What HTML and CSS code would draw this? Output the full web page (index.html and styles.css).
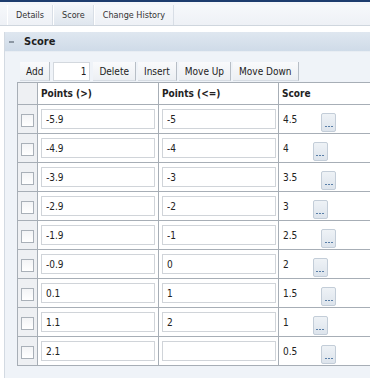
FILE: index.html
```html
<!DOCTYPE html>
<html lang="en">
  <head>
    <meta charset="UTF-8" />
    <title>Score</title>
    <link rel="stylesheet" href="styles.css">
  </head>
  <body>
    <div class="topbar"></div>
    <div class="tabs">
      <span class="tab">Details</span>
      <span class="tab selected">Score</span>
      <span class="tab">Change History</span>
    </div>

    <div class="panel">
      <div class="panel-head">
        <span class="collapse"></span>
        <span class="title">Score</span>
      </div>
      <div class="panel-body">
        <div class="toolbar">
          <button>Add</button>
          <input type="text" class="count" value="1" />
          <button>Delete</button>
          <button>Insert</button>
          <button>Move Up</button>
          <button>Move Down</button>
        </div>

        <table class="grid">
          <colgroup>
            <col class="c-sel" />
            <col class="c-from" />
            <col class="c-to" />
            <col class="c-score" />
          </colgroup>
          <thead>
            <tr>
              <th class="sel"></th>
              <th>Points (&gt;)</th>
              <th>Points (&lt;=)</th>
              <th>Score</th>
            </tr>
          </thead>
          <tbody>
            <tr>
              <td class="sel"><span class="check"></span></td>
              <td><input type="text" value="-5.9" /></td>
              <td><input type="text" value="-5" /></td>
              <td><div class="score">4.5<span class="more"><i></i><i></i><i></i></span></div></td>
            </tr>
            <tr>
              <td class="sel"><span class="check"></span></td>
              <td><input type="text" value="-4.9" /></td>
              <td><input type="text" value="-4" /></td>
              <td><div class="score">4<span class="more"><i></i><i></i><i></i></span></div></td>
            </tr>
            <tr>
              <td class="sel"><span class="check"></span></td>
              <td><input type="text" value="-3.9" /></td>
              <td><input type="text" value="-3" /></td>
              <td><div class="score">3.5<span class="more"><i></i><i></i><i></i></span></div></td>
            </tr>
            <tr>
              <td class="sel"><span class="check"></span></td>
              <td><input type="text" value="-2.9" /></td>
              <td><input type="text" value="-2" /></td>
              <td><div class="score">3<span class="more"><i></i><i></i><i></i></span></div></td>
            </tr>
            <tr>
              <td class="sel"><span class="check"></span></td>
              <td><input type="text" value="-1.9" /></td>
              <td><input type="text" value="-1" /></td>
              <td><div class="score">2.5<span class="more"><i></i><i></i><i></i></span></div></td>
            </tr>
            <tr>
              <td class="sel"><span class="check"></span></td>
              <td><input type="text" value="-0.9" /></td>
              <td><input type="text" value="0" /></td>
              <td><div class="score">2<span class="more"><i></i><i></i><i></i></span></div></td>
            </tr>
            <tr>
              <td class="sel"><span class="check"></span></td>
              <td><input type="text" value="0.1" /></td>
              <td><input type="text" value="1" /></td>
              <td><div class="score">1.5<span class="more"><i></i><i></i><i></i></span></div></td>
            </tr>
            <tr>
              <td class="sel"><span class="check"></span></td>
              <td><input type="text" value="1.1" /></td>
              <td><input type="text" value="2" /></td>
              <td><div class="score">1<span class="more"><i></i><i></i><i></i></span></div></td>
            </tr>
            <tr>
              <td class="sel"><span class="check"></span></td>
              <td><input type="text" value="2.1" /></td>
              <td><input type="text" value="" /></td>
              <td><div class="score">0.5<span class="more"><i></i><i></i><i></i></span></div></td>
            </tr>
          </tbody>
        </table>
      </div>
    </div>
  </body>
</html>
```

FILE: styles.css
```css
body {
  margin: 0;
  padding: 0;
  background: #ffffff;
  font-family: "DejaVu Sans Condensed", "DejaVu Sans", sans-serif;
  font-size: 10px;
  color: #222;
  overflow: hidden;
}

.topbar {
  height: 2px;
  background: #1d3c6e;
  border-bottom: 3px solid #f4f6fa;
}

.tabs {
  display: flex;
  height: 20px;
  padding-left: 7px;
  background: linear-gradient(#f6f8fb, #eef1f6);
  border-bottom: 1px solid #cfd6de;
}

.tab {
  display: flex;
  align-items: center;
  padding: 0 8px;
  font-size: 9px;
  color: #333;
  border-left: 1px solid #ffffff;
  border-right: 1px solid #d8dee6;
}

.tab.selected {
  background: linear-gradient(#f2f5f9, #dfe6ee);
}

.panel {
  margin-top: 6px;
  margin-left: 4px;
  border-left: 1px solid #d3dae2;
  background: #eff3f8;
  height: 400px;
}

.panel-head {
  display: flex;
  align-items: center;
  height: 19px;
  background: linear-gradient(#dfe7f0, #cfdbe8);
  border-bottom: 1px solid #e8edf3;
}

.collapse {
  width: 5px;
  height: 2px;
  margin: 0 10px 0 4px;
  background: #8c97a3;
}

.title {
  font-weight: bold;
  font-size: 11px;
  color: #1e1e1e;
}

.panel-body {
  padding: 10px 0 0 12px;
}

.toolbar {
  display: flex;
  align-items: center;
  gap: 2px;
  height: 19px;
  padding-left: 3px;
  margin-bottom: 1px;
}

.toolbar button {
  height: 19px;
  padding: 0 6px;
  font-family: inherit;
  font-size: 10px;
  color: #222;
  background: linear-gradient(#f9fafc, #eceff3);
  border: none;
  border-right: 1px solid #b7bec6;
  border-bottom: 1px solid #d5dbe2;
  border-radius: 0;
}

.toolbar .count {
  width: 32px;
  height: 17px;
  padding: 0 3px 0 0;
  margin: 0 1px;
  text-align: right;
  font-family: inherit;
  font-size: 10px;
  color: #222;
  border: 1px solid #d3d8de;
  background: #ffffff;
}

.grid {
  border-collapse: collapse;
  table-layout: fixed;
  width: 380px;
  background: #ffffff;
}

.c-sel {
  width: 20px;
}

.c-from {
  width: 121px;
}

.c-to {
  width: 120px;
}

.grid th,
.grid td {
  border: 1px solid #a7aeb6;
  padding: 0 3px;
  text-align: left;
}

.grid th {
  height: 21px;
  font-weight: bold;
  background: #ffffff;
}

.grid td {
  height: 28px;
}

.grid .sel {
  background: #eef0f3;
  padding: 0;
  text-align: center;
}

.check {
  display: inline-block;
  width: 11px;
  height: 11px;
  margin-top: 2px;
  border: 1px solid #a9b0b8;
  background: linear-gradient(#f3f4f6, #ffffff);
  vertical-align: middle;
}

.grid input {
  box-sizing: border-box;
  width: 114px;
  height: 20px;
  padding: 0 4px;
  font-family: inherit;
  font-size: 10px;
  color: #222;
  border: 1px solid #d0d4d9;
  background: #ffffff;
}

.score {
  display: flex;
  align-items: center;
  padding-left: 1px;
}

.more {
  display: inline-flex;
  align-items: flex-end;
  justify-content: center;
  gap: 1px;
  box-sizing: border-box;
  width: 15px;
  height: 19px;
  margin: 7px 0 0 24px;
  padding-bottom: 4px;
  border: 1px solid #c3cdd8;
  border-radius: 2px;
  background: linear-gradient(#eef2f6, #dde4ec);
}

.more i {
  width: 2px;
  height: 1px;
  background: #5a7fa8;
}
```
